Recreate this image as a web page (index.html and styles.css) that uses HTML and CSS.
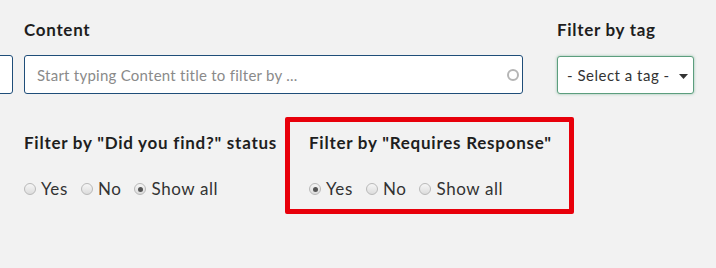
FILE: index.html
```html
<!DOCTYPE html>
<html>
<head>
<meta charset="utf-8">
<link rel="stylesheet" href="styles.css">
</head>
<body>
<div class="page">
  <div class="top-row">
    <div class="field field-stub">
      <div class="label">&nbsp;</div>
      <input class="text-input stub-input" type="text">
    </div>
    <div class="field field-content">
      <div class="label">Content</div>
      <div class="input-wrap">
        <input class="text-input content-input" type="text" placeholder="Start typing Content title to filter by ...">
        <span class="spinner"></span>
      </div>
    </div>
    <div class="field field-tag">
      <div class="label">Filter by tag</div>
      <div class="select">
        <span>- Select a tag -</span>
        <svg class="caret" width="9" height="5" viewBox="0 0 9 5"><path d="M0 0 L9 0 L4.5 5 Z" fill="#333"/></svg>
      </div>
    </div>
  </div>
  <div class="filters">
    <div class="group group-find">
      <div class="group-title">Filter by "Did you find?" status</div>
      <div class="radios">
        <label class="radio"><span class="dot"></span>Yes</label>
        <label class="radio"><span class="dot"></span>No</label>
        <label class="radio"><span class="dot checked"></span>Show all</label>
      </div>
    </div>
    <div class="group group-response">
      <div class="group-title">Filter by "Requires Response"</div>
      <div class="radios">
        <label class="radio"><span class="dot checked"></span>Yes</label>
        <label class="radio"><span class="dot"></span>No</label>
        <label class="radio"><span class="dot"></span>Show all</label>
      </div>
    </div>
  </div>
</div>
</body>
</html>
```

FILE: styles.css
```css
html, body {
  margin: 0;
  padding: 0;
  background: #f2f2f2;
  font-family: Lato, "Open Sans", sans-serif;
  color: #1a1a1a;
}
.page {
  width: 716px;
  height: 268px;
  overflow: hidden;
}
.top-row {
  display: flex;
  padding-top: 18px;
}
.field {
  display: flex;
  flex-direction: column;
}
.label {
  font-size: 17px;
  font-weight: 700;
  letter-spacing: 0.7px;
  line-height: 24px;
  height: 24px;
  margin-bottom: 13px;
  white-space: nowrap;
  color: #1e1e1e;
}
.field-stub {
  width: 100px;
  margin-left: -87px;
}
.field-content {
  width: 499px;
  margin-left: 11px;
}
.field-tag {
  width: 137px;
  margin-left: 34px;
}
.text-input {
  box-sizing: border-box;
  height: 39px;
  width: 100%;
  border: 1px solid #1f4e79;
  border-radius: 3px;
  background: #fff;
  font-family: Lato, sans-serif;
  font-size: 15px;
  letter-spacing: 0.25px;
  padding: 0 12px;
  outline: none;
}
.text-input::placeholder {
  color: #8a8a8a;
}
.input-wrap {
  position: relative;
}
.spinner {
  position: absolute;
  right: 4px;
  top: 14px;
  width: 8px;
  height: 8px;
  border: 2px solid #b5b5b5;
  border-radius: 50%;
}
.select {
  box-sizing: border-box;
  height: 38px;
  margin-top: 1px;
  border: 1px solid #5c9e7e;
  border-radius: 3px;
  background: #fff;
  box-shadow: 0 0 3px rgba(70, 150, 110, 0.55);
  display: flex;
  align-items: center;
  justify-content: space-between;
  padding: 0 5px 0 9px;
  font-size: 15px;
  letter-spacing: 0.5px;
  color: #333;
}
.caret {
  margin-top: 2px;
}
.filters {
  display: flex;
  margin-top: 23px;
}
.group {
  box-sizing: border-box;
  height: 97px;
  padding-top: 14px;
}
.group-find {
  margin-left: 24px;
  width: 252px;
  margin-right: 9px;
}
.group-response {
  width: 289px;
  border: 5px solid #e8000b;
  border-radius: 2px;
  padding: 9px 10px 0 19px;
}
.group-title {
  font-size: 17px;
  font-weight: 700;
  letter-spacing: 0.75px;
  line-height: 24px;
  white-space: nowrap;
  color: #1e1e1e;
}
.radios {
  display: flex;
  margin-top: 22px;
  font-size: 17px;
  letter-spacing: 0.6px;
  line-height: 24px;
  color: #333;
}
.radio {
  display: flex;
  align-items: center;
  margin-right: 13px;
}
.dot {
  box-sizing: border-box;
  width: 12px;
  height: 12px;
  border-radius: 50%;
  border: 1px solid #b9b9b9;
  background: linear-gradient(#f6f6f6, #dcdcdc);
  margin-right: 5px;
  position: relative;
}
.dot.checked::after {
  content: "";
  position: absolute;
  left: 2.5px;
  top: 2.5px;
  width: 5px;
  height: 5px;
  border-radius: 50%;
  background: #555;
}
```
